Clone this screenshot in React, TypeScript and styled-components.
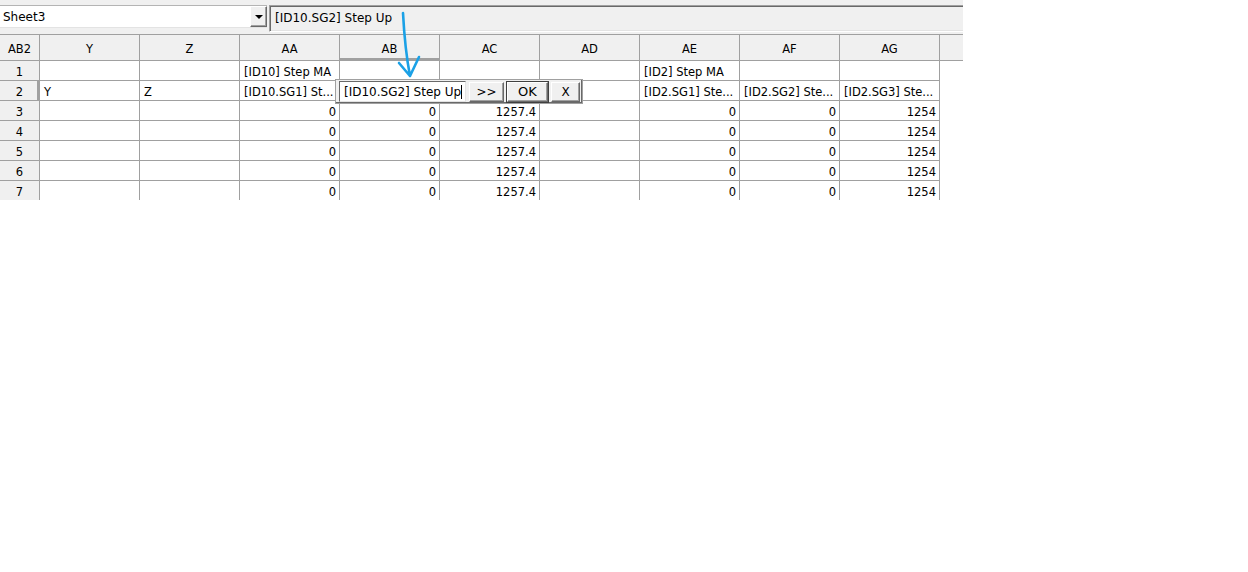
import styled, { createGlobalStyle, css } from 'styled-components';

const GlobalStyle = createGlobalStyle`
    body {
        margin: 0;
        background: #ffffff;
        font-family: 'DejaVu Sans', 'Liberation Sans', sans-serif;
        font-size: 11.5px;
        color: #000000;
    }
`;

const COLUMNS = ['Y', 'Z', 'AA', 'AB', 'AC', 'AD', 'AE', 'AF', 'AG'];
const ACTIVE_COL = 'AB';
const ACTIVE_ROW = 2;

type Cell = { text: string; right?: boolean };
type Row = Record<string, Cell>;

const numberRow: Row = {
    AA: { text: '0', right: true },
    AB: { text: '0', right: true },
    AC: { text: '1257.4', right: true },
    AE: { text: '0', right: true },
    AF: { text: '0', right: true },
    AG: { text: '1254', right: true },
};

const ROWS: Row[] = [
    {
        AA: { text: '[ID10] Step MA' },
        AE: { text: '[ID2] Step MA' },
    },
    {
        Y: { text: 'Y' },
        Z: { text: 'Z' },
        AA: { text: '[ID10.SG1] St...' },
        AE: { text: '[ID2.SG1] Ste...' },
        AF: { text: '[ID2.SG2] Ste...' },
        AG: { text: '[ID2.SG3] Ste...' },
    },
    numberRow,
    numberRow,
    numberRow,
    numberRow,
    numberRow,
];

// little hand drawn pointer from the formula bar down to the editor
const Pointer = () => (
    <PointerSvg width="30" height="72" viewBox="0 0 30 72">
        <path
            d="M8 3 C9 22, 10 40, 15 66 M4 53 L15 66 M24 47 L15 66"
            fill="none"
            stroke="#1ba1e6"
            strokeWidth="2.6"
            strokeLinecap="round"
            strokeLinejoin="round"
        />
    </PointerSvg>
);

const App = () => {
    return (
        <>
            <GlobalStyle />
            <Window>
                <Toolbar>
                    <SheetCombo>
                        <ComboText>Sheet3</ComboText>
                        <DropButton>
                            <Triangle />
                        </DropButton>
                    </SheetCombo>
                    <FormulaBox>[ID10.SG2] Step Up</FormulaBox>
                </Toolbar>

                <Sheet>
                    <Grid>
                        <HeadCell>AB2</HeadCell>
                        {COLUMNS.map((c) => (
                            <HeadCell key={c} $active={c === ACTIVE_COL}>
                                {c}
                            </HeadCell>
                        ))}
                        <HeadFiller />

                        {ROWS.map((row, i) => (
                            <RowGroup key={i}>
                                <RowHead $active={i + 1 === ACTIVE_ROW}>
                                    {i + 1}
                                </RowHead>
                                {COLUMNS.map((c) => (
                                    <DataCell key={c} $right={row[c]?.right}>
                                        {row[c]?.text}
                                    </DataCell>
                                ))}
                                <span />
                            </RowGroup>
                        ))}
                    </Grid>

                    <Editor>
                        <EditInput>
                            [ID10.SG2] Step Up
                            <Caret />
                        </EditInput>
                        <EditButton $w={35}>&gt;&gt;</EditButton>
                        <EditButton $w={41} $default>
                            OK
                        </EditButton>
                        <EditButton $w={29}>X</EditButton>
                    </Editor>
                </Sheet>

                <Pointer />
            </Window>
        </>
    );
};

const Window = styled.div`
    position: relative;
    width: 963px;
`;

const Toolbar = styled.div`
    display: flex;
    align-items: flex-start;
    height: 34px;
    padding-top: 5px;
    box-sizing: border-box;
    background: #f0f0f0;
`;

const SheetCombo = styled.div`
    display: flex;
    align-items: stretch;
    width: 267px;
    height: 23px;
    box-sizing: border-box;
    background: #ffffff;
    border-top: 1px solid #b4b4b4;
    border-bottom: 1px solid #e3e3e3;
`;

const ComboText = styled.div`
    flex: 1;
    padding: 4px 0 0 3px;
    font-size: 12px;
`;

const DropButton = styled.div`
    display: flex;
    align-items: center;
    justify-content: center;
    width: 17px;
    box-sizing: border-box;
    background: #f0f0f0;
    border-top: 1px solid #ffffff;
    border-left: 1px solid #ffffff;
    border-right: 1px solid #696969;
    border-bottom: 1px solid #696969;
    box-shadow: inset -1px -1px 0 #a0a0a0;
`;

const Triangle = styled.div`
    width: 0;
    height: 0;
    border-left: 4px solid transparent;
    border-right: 4px solid transparent;
    border-top: 4px solid #000000;
`;

const FormulaBox = styled.div`
    flex: 1;
    height: 27px;
    margin-left: 2px;
    padding: 5px 0 0 5px;
    box-sizing: border-box;
    font-size: 12px;
    background: #f0f0f0;
    border-top: 1px solid #a0a0a0;
    border-left: 1px solid #a0a0a0;
    border-bottom: 1px solid #ffffff;
    box-shadow: inset 1px 1px 0 #696969, inset 0 -1px 0 #e3e3e3;
`;

const Sheet = styled.div`
    position: relative;
    height: 165px;
    overflow: hidden;
    border-top: 1px solid #a0a0a0;
`;

const Grid = styled.div`
    display: grid;
    grid-template-columns: 40px repeat(9, 100px) 23px;
    grid-auto-rows: 20px;
    grid-template-rows: 26px;
`;

const RowGroup = styled.div`
    display: contents;
`;

const cellBase = css`
    box-sizing: border-box;
    border-right: 1px solid #a0a0a0;
    border-bottom: 1px solid #a0a0a0;
    padding-top: 2px;
    white-space: nowrap;
    overflow: hidden;
    display: flex;
    align-items: center;
`;

const HeadCell = styled.div<{ $active?: boolean }>`
    ${cellBase};
    justify-content: center;
    background: #f0f0f0;
    ${(p) =>
        p.$active &&
        css`
            border-bottom: 3px solid #a0a0a0;
            padding-top: 4px;
        `}
`;

const HeadFiller = styled.div`
    background: #f0f0f0;
    border-bottom: 1px solid #a0a0a0;
`;

const RowHead = styled.div<{ $active?: boolean }>`
    ${cellBase};
    justify-content: center;
    background: #f0f0f0;
    ${(p) =>
        p.$active &&
        css`
            border-right: 3px solid #a0a0a0;
            padding-left: 2px;
        `}
`;

const DataCell = styled.div<{ $right?: boolean }>`
    ${cellBase};
    background: #ffffff;
    padding-left: 4px;
    padding-right: 3px;
    justify-content: ${(p) => (p.$right ? 'flex-end' : 'flex-start')};
`;

const Editor = styled.div`
    position: absolute;
    left: 335px;
    top: 44px;
    width: 248px;
    height: 25px;
    box-sizing: border-box;
    display: flex;
    align-items: center;
    gap: 3px;
    padding: 0 2px 0 3px;
    background: #f0f0f0;
    border: 1px solid #a0a0a0;
    box-shadow: inset -1px -1px 0 #696969;
`;

const EditInput = styled.div`
    display: flex;
    align-items: center;
    width: 127px;
    height: 21px;
    box-sizing: border-box;
    padding: 1px 0 0 4px;
    background: #ffffff;
    font-size: 12px;
    border-top: 1px solid #696969;
    border-left: 1px solid #696969;
    border-right: 1px solid #e3e3e3;
    border-bottom: 1px solid #e3e3e3;
`;

const Caret = styled.span`
    display: inline-block;
    width: 1px;
    height: 14px;
    background: #000000;
`;

const EditButton = styled.div<{ $w: number; $default?: boolean }>`
    width: ${(p) => p.$w}px;
    height: 20px;
    box-sizing: border-box;
    display: flex;
    align-items: center;
    justify-content: center;
    font-size: 12px;
    background: #f0f0f0;
    border-top: 1px solid #ffffff;
    border-left: 1px solid #ffffff;
    border-right: 1px solid #696969;
    border-bottom: 1px solid #696969;
    box-shadow: inset -1px -1px 0 #a0a0a0;
    ${(p) =>
        p.$default &&
        css`
            outline: 1px solid #404040;
            font-size: 13px;
        `}
`;

const PointerSvg = styled.svg`
    position: absolute;
    left: 395px;
    top: 10px;
    pointer-events: none;
`;

export default App;
